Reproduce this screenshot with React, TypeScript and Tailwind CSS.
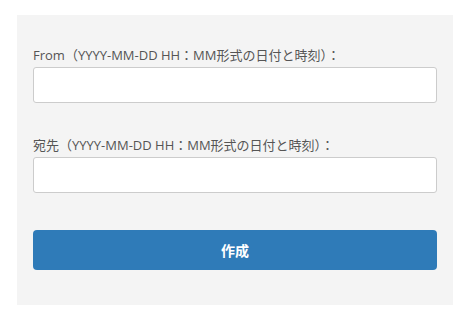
export default function App() {
  const font = { fontFamily: '"Open Sans", "Noto Sans CJK JP", sans-serif' };
  return (
    <div className="w-[465px] h-[322px] bg-white pt-[15px] pl-[17px]" style={font}>
      <form className="w-[436px] h-[290px] bg-[#f4f4f4] px-4 pt-[32px]">
        <div className="mb-[34px]">
          <label htmlFor="from" className="block text-[13px] leading-[17px] text-[#555] mb-[3px]">
            From（YYYY-MM-DD HH：MM形式の日付と時刻）：
          </label>
          <input
            id="from"
            type="text"
            className="block w-full h-[36px] bg-white border border-[#ccc] rounded-[3px]"
          />
        </div>
        <div className="mb-[37px]">
          <label htmlFor="to" className="block text-[13px] leading-[17px] text-[#555] mb-[3px]">
            宛先（YYYY-MM-DD HH：MM形式の日付と時刻）：
          </label>
          <input
            id="to"
            type="text"
            className="block w-full h-[36px] bg-white border border-[#ccc] rounded-[3px]"
          />
        </div>
        <button
          type="button"
          className="block w-full h-[40px] bg-[#2f7bb8] rounded-[4px] text-white font-bold text-[14px]"
        >
          作成
        </button>
      </form>
    </div>
  );
}
